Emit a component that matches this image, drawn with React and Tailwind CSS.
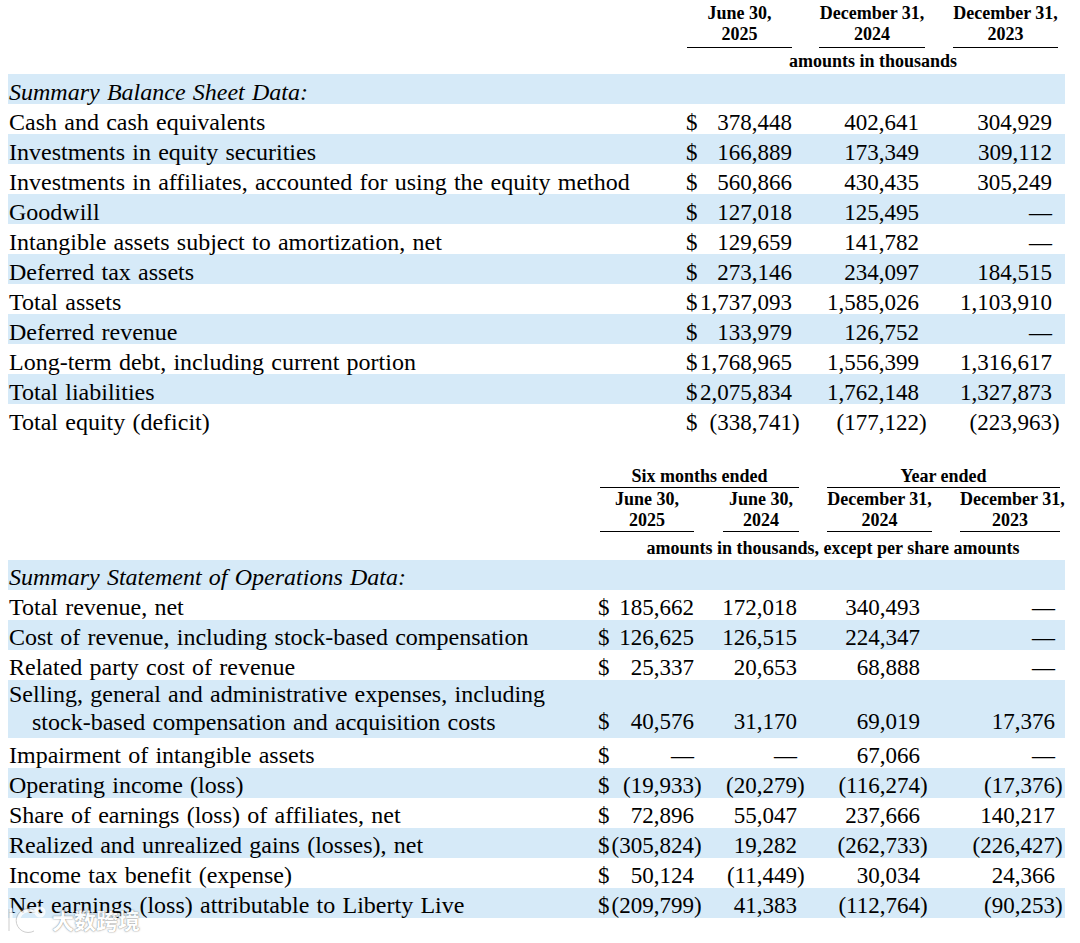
import React from 'react';

const t1 = [
  ['Cash and cash equivalents', '378,448', '402,641', '304,929'],
  ['Investments in equity securities', '166,889', '173,349', '309,112'],
  ['Investments in affiliates, accounted for using the equity method', '560,866', '430,435', '305,249'],
  ['Goodwill', '127,018', '125,495', '—'],
  ['Intangible assets subject to amortization, net', '129,659', '141,782', '—'],
  ['Deferred tax assets', '273,146', '234,097', '184,515'],
  ['Total assets', '1,737,093', '1,585,026', '1,103,910'],
  ['Deferred revenue', '133,979', '126,752', '—'],
  ['Long-term debt, including current portion', '1,768,965', '1,556,399', '1,316,617'],
  ['Total liabilities', '2,075,834', '1,762,148', '1,327,873'],
  ['Total equity (deficit)', '(338,741)', '(177,122)', '(223,963)'],
];

const t2 = [
  ['Total revenue, net', '185,662', '172,018', '340,493', '—'],
  ['Cost of revenue, including stock-based compensation', '126,625', '126,515', '224,347', '—'],
  ['Related party cost of revenue', '25,337', '20,653', '68,888', '—'],
  ['SGA', '40,576', '31,170', '69,019', '17,376'],
  ['Impairment of intangible assets', '—', '—', '67,066', '—'],
  ['Operating income (loss)', '(19,933)', '(20,279)', '(116,274)', '(17,376)'],
  ['Share of earnings (loss) of affiliates, net', '72,896', '55,047', '237,666', '140,217'],
  ['Realized and unrealized gains (losses), net', '(305,824)', '19,282', '(262,733)', '(226,427)'],
  ['Income tax benefit (expense)', '50,124', '(11,449)', '30,034', '24,366'],
  ['Net earnings (loss) attributable to Liberty Live', '(209,799)', '41,383', '(112,764)', '(90,253)'],
];

function split(v) {
  if (v.startsWith('(') && v.endsWith(')')) return [v.slice(0, -1), ')'];
  return [v, ''];
}

function Val({ v, dollar, cls }) {
  const [n, p] = split(v);
  return (
    <div className={`flex shrink-0 text-[23px] ${cls}`}>
      {dollar && <span>$</span>}
      <span className="flex-1 text-right whitespace-nowrap">{n}</span>
      <span className="w-[8px] shrink-0">{p}</span>
    </div>
  );
}

function Wordmark() {
  return (
    <div className="absolute left-[4px] top-[903px] flex items-center gap-[4px] opacity-85">
      <svg width="44" height="32" viewBox="0 0 44 32" fill="none">
        <g stroke="#ffffff" strokeWidth="3.2" strokeLinecap="round">
          <path d="M7 6 L7 28" />
          <path d="M30 9 A10 10 0 1 0 30 26" />
          <circle cx="36" cy="9" r="4" />
        </g>
        <g stroke="#9a9a9a" strokeWidth="0.8" fill="none" opacity="0.7">
          <path d="M5 6 L5 28" />
          <path d="M30 7 A12 12 0 1 0 30 28" />
        </g>
      </svg>
      <span className="font-['Noto_Sans_CJK_SC',sans-serif] text-[22px] font-bold leading-none text-white [text-shadow:0_0_1px_rgba(90,90,90,0.9),0_0_2px_rgba(90,90,90,0.5)]">
        大数跨境
      </span>
    </div>
  );
}

export default function App() {
  return (
    <div className="relative w-[1080px] h-[943px] bg-white text-black font-['Liberation_Serif',serif] overflow-hidden">
      {/* Table 1 header */}
      <div className="pt-[2px] text-[18px] font-bold leading-[21px]">
        <div className="flex">
          <div className="w-[687px] shrink-0" />
          <div className="w-[105px] shrink-0 text-center border-b border-black pb-[2px] pt-[1px]">June 30,<br />2025</div>
          <div className="w-[27px] shrink-0" />
          <div className="w-[106px] shrink-0 text-center border-b border-black pb-[2px] pt-[1px] whitespace-nowrap">December 31,<br />2024</div>
          <div className="w-[28px] shrink-0" />
          <div className="w-[105px] shrink-0 text-center border-b border-black pb-[2px] pt-[1px] whitespace-nowrap">December 31,<br />2023</div>
        </div>
        <div className="flex mt-[3px]">
          <div className="w-[686px] shrink-0" />
          <div className="w-[374px] shrink-0 text-center">amounts in thousands</div>
        </div>
      </div>

      {/* Table 1 body */}
      <div className="mt-[2px] ml-[8px] w-[1057px] text-[24px] leading-[30px] [word-spacing:1.25px]">
        <div className="flex h-[30px] items-baseline pt-[3px] bg-[#d6eaf8] pl-[1px] italic">Summary Balance Sheet Data:</div>
        {t1.map((r, i) => (
          <div key={i} className={`flex h-[30px] items-baseline pt-[3px] ${i % 2 === 1 ? 'bg-[#d6eaf8]' : ''}`}>
            <div className="w-[678px] shrink-0 pl-[1px] whitespace-nowrap">{r[0]}</div>
            <Val v={r[1]} dollar cls="w-[114px]" />
            <div className="w-[18px] shrink-0" />
            <Val v={r[2]} cls="w-[109px]" />
            <div className="w-[23px] shrink-0" />
            <Val v={r[3]} cls="w-[110px]" />
          </div>
        ))}
      </div>

      {/* Table 2 header */}
      <div className="mt-[32px] text-[18px] font-bold leading-[21px]">
        <div className="flex">
          <div className="w-[600px] shrink-0" />
          <div className="w-[199px] shrink-0 text-center border-b border-black">Six months ended</div>
          <div className="w-[28px] shrink-0" />
          <div className="w-[233px] shrink-0 text-center border-b border-black">Year ended</div>
        </div>
        <div className="flex">
          <div className="w-[600px] shrink-0" />
          <div className="w-[94px] shrink-0 text-center border-b border-black pt-[1px]">June 30,<br />2025</div>
          <div className="w-[29px] shrink-0" />
          <div className="w-[76px] shrink-0 text-center border-b border-black pt-[1px] whitespace-nowrap">June 30,<br />2024</div>
          <div className="w-[28px] shrink-0" />
          <div className="w-[105px] shrink-0 text-center border-b border-black pt-[1px] whitespace-nowrap">December 31,<br />2024</div>
          <div className="w-[28px] shrink-0" />
          <div className="w-[100px] shrink-0 text-center border-b border-black pt-[1px] whitespace-nowrap">December 31,<br />2023</div>
        </div>
        <div className="flex mt-[6px]">
          <div className="w-[598px] shrink-0" />
          <div className="w-[470px] shrink-0 text-center whitespace-nowrap">amounts in thousands, except per share amounts</div>
        </div>
      </div>

      {/* Table 2 body */}
      <div className="mt-[1px] ml-[8px] w-[1057px] text-[24px] leading-[30px] [word-spacing:1.25px]">
        <div className="flex h-[30px] items-baseline pt-[2px] bg-[#d6eaf8] pl-[1px] italic">Summary Statement of Operations Data:</div>
        {t2.map((r, i) => {
          const sga = r[0] === 'SGA';
          return (
            <div
              key={i}
              className={`flex ${sga ? 'h-[58px] items-end pb-[2px] leading-[28px]' : 'h-[30px] items-baseline pt-[2px]'} ${i % 2 === 1 ? 'bg-[#d6eaf8]' : ''}`}
            >
              <div className="w-[590px] shrink-0 pl-[1px] whitespace-nowrap">
                {sga ? (
                  <>
                    <div>Selling, general and administrative expenses, including</div>
                    <div className="pl-[23px]">stock-based compensation and acquisition costs</div>
                  </>
                ) : (
                  r[0]
                )}
              </div>
              <Val v={r[1]} dollar cls="w-[104px]" />
              <div className="w-[17px] shrink-0" />
              <Val v={r[2]} cls="w-[86px]" />
              <div className="w-[21px] shrink-0" />
              <Val v={r[3]} cls="w-[102px]" />
              <div className="w-[27px] shrink-0" />
              <Val v={r[4]} cls="w-[108px]" />
            </div>
          );
        })}
      </div>

      <Wordmark />
    </div>
  );
}
